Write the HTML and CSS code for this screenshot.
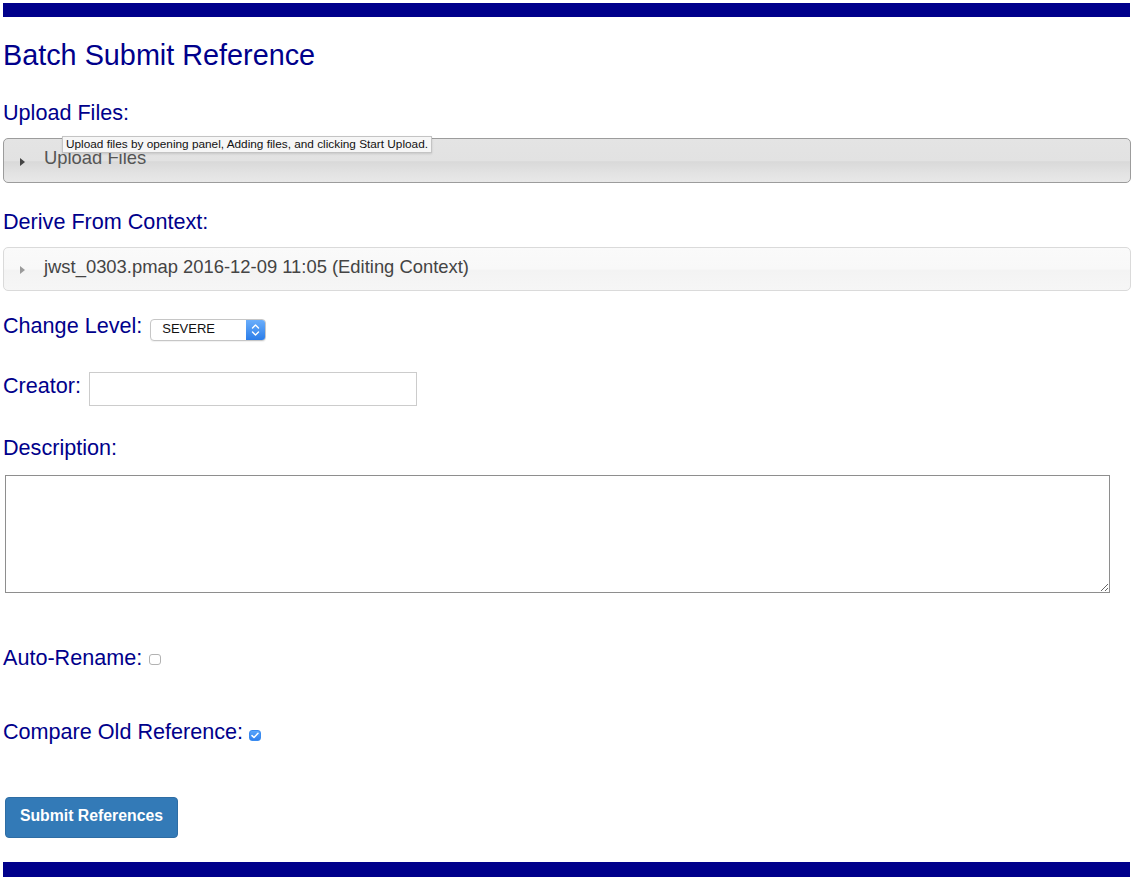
FILE: index.html
```html
<!DOCTYPE html>
<html lang="en">
<head>
<meta charset="utf-8">
<title>Batch Submit Reference</title>
<link rel="stylesheet" href="styles.css">
</head>
<body>
<div class="page">
  <div class="bar"></div>
  <h1 class="title">Batch Submit Reference</h1>

  <div class="label label-upload">Upload Files:</div>
  <div class="panel-wrap">
    <div class="panel panel-upload">
      <span class="tri tri-dark"></span>
      <span class="panel-text">Upload Files</span>
    </div>
    <div class="tooltip">Upload files by opening panel, Adding files, and clicking Start Upload.</div>
  </div>

  <div class="label label-derive">Derive From Context:</div>
  <div class="panel panel-context">
    <span class="tri tri-light"></span>
    <span class="panel-text panel-text-ctx">jwst_0303.pmap 2016-12-09 11:05 (Editing Context)</span>
  </div>

  <div class="row row-level">
    <span class="label">Change Level:</span>
    <div class="select">
      <span class="select-value">SEVERE</span>
      <span class="stepper">
        <svg width="9" height="14" viewBox="0 0 9 14"><path d="M1.5 5 L4.5 2 L7.5 5" fill="none" stroke="#fff" stroke-width="1.4" stroke-linecap="round" stroke-linejoin="round"/><path d="M1.5 9 L4.5 12 L7.5 9" fill="none" stroke="#fff" stroke-width="1.4" stroke-linecap="round" stroke-linejoin="round"/></svg>
      </span>
    </div>
  </div>

  <div class="row row-creator">
    <span class="label label-creator">Creator:</span>
    <input class="text-input" type="text">
  </div>

  <div class="label label-desc">Description:</div>
  <textarea class="desc"></textarea>

  <div class="label row-auto">Auto-Rename:<span class="check"></span></div>

  <div class="label row-compare">Compare Old Reference:<span class="check check-on"><svg width="8" height="7" viewBox="0 0 8 7"><path d="M1 3.6 L3 5.5 L7 1.2" fill="none" stroke="#fff" stroke-width="1.5" stroke-linecap="round" stroke-linejoin="round"/></svg></span></div>

  <button class="btn" type="button">Submit References</button>

  <div class="bar bar-bottom"></div>
</div>
</body>
</html>
```

FILE: styles.css
```css
html, body {
  margin: 0;
  padding: 0;
  background: #fff;
}

body {
  font-family: "Liberation Sans", Arial, Helvetica, sans-serif;
  color: #00008b;
}

.page {
  padding: 3px 2px 0 3px;
}

.bar {
  height: 14px;
  margin-right: 1px;
  background: #00008b;
}

.bar-bottom {
  height: 15px;
  margin-top: 24px;
}

.title {
  margin: 22px 0 0 0;
  font-size: 28.8px;
  line-height: 33px;
  font-weight: normal;
  color: #00008b;
}

.label {
  font-size: 21.6px;
  line-height: 25px;
  color: #00008b;
}

.label-upload {
  margin-top: 28px;
}

.panel-wrap {
  position: relative;
  margin-top: 13px;
}

.panel {
  display: flex;
  align-items: flex-start;
  border-radius: 5px;
  font-size: 18.4px;
  line-height: 22px;
}

.panel-upload {
  height: 45px;
  box-sizing: border-box;
  padding: 8px 0 0 16px;
  border: 1px solid #9c9c9c;
  background: linear-gradient(#e4e4e4 0%, #e2e2e2 50%, #d9d9d9 53%, #e3e3e3 80%, #e8e8e8 100%);
}

.panel-context {
  height: 44px;
  box-sizing: border-box;
  margin-top: 13px;
  padding: 8px 0 0 16px;
  border: 1px solid #dadada;
  background: linear-gradient(#fafafa 0%, #f8f8f8 50%, #f3f3f3 53%, #f6f6f6 100%);
}

.tri {
  width: 0;
  height: 0;
  margin-top: 11px;
  border-top: 4px solid transparent;
  border-bottom: 4px solid transparent;
  border-left: 5px solid #444;
}

.tri-light {
  border-left-color: #9a9a9a;
  margin-top: 10px;
}

.panel-text {
  margin-left: 19px;
  color: #555;
}

.panel-text-ctx {
  color: #444;
}

.tooltip {
  position: absolute;
  left: 59px;
  top: -2px;
  height: 17px;
  box-sizing: border-box;
  padding: 0 3px;
  font-size: 11.8px;
  line-height: 15px;
  color: #111;
  white-space: nowrap;
  background: #f6f6f6;
  border: 1px solid #c4c4c4;
  box-shadow: 0 1px 2px rgba(0, 0, 0, 0.12);
}

.label-derive {
  margin-top: 26px;
}

.row {
  display: flex;
  align-items: flex-start;
}

.row-level {
  margin-top: 22px;
}

.select {
  display: flex;
  margin: 6px 0 0 8px;
  width: 116px;
  height: 22px;
  box-sizing: border-box;
  border: 1px solid #c6c6c6;
  border-radius: 4px;
  background: #fff;
  overflow: hidden;
  box-shadow: 0 1px 1px rgba(0, 0, 0, 0.06);
}

.select-value {
  flex: 1;
  padding: 1px 0 3px 11px;
  font-size: 13px;
  line-height: 16px;
  color: #111;
}

.stepper {
  display: flex;
  align-items: center;
  justify-content: center;
  width: 19px;
  background: linear-gradient(#6aaefb, #2b7de9);
}

.row-creator {
  margin-top: 31px;
}

.label-creator {
  margin-top: 1px;
}

.text-input {
  margin: 0 0 0 8px;
  width: 328px;
  height: 34px;
  box-sizing: border-box;
  border: 1px solid #cccccc;
  border-radius: 0;
  padding: 6px 12px;
  font-family: inherit;
  font-size: 14px;
  background: #fff;
}

.label-desc {
  margin-top: 29px;
}

.desc {
  display: block;
  margin: 15px 0 0 2px;
  width: 1105px;
  height: 118px;
  box-sizing: border-box;
  border: 1px solid #8e8e8e;
  border-radius: 0;
  padding: 2px;
  font-family: inherit;
  font-size: 14px;
}

.row-auto {
  margin-top: 52px;
}

.row-compare {
  margin-top: 49px;
}

.check {
  display: inline-flex;
  align-items: center;
  justify-content: center;
  width: 12px;
  height: 11px;
  margin-left: 7px;
  box-sizing: border-box;
  border: 1px solid #b2b2b2;
  border-radius: 3px;
  background: #fff;
  vertical-align: baseline;
}

.check-on {
  margin-left: 6px;
  border-color: #3a8bf0;
  background: linear-gradient(#5aa5fb, #2f80ee);
}

.btn {
  display: block;
  margin: 53px 0 0 2px;
  width: 173px;
  height: 41px;
  box-sizing: border-box;
  padding: 0 0 3px 0;
  border: 1px solid #2e6da4;
  border-radius: 4px;
  background: #337ab7;
  color: #fff;
  font-family: inherit;
  font-size: 15.8px;
  font-weight: bold;
  text-align: center;
}
```
